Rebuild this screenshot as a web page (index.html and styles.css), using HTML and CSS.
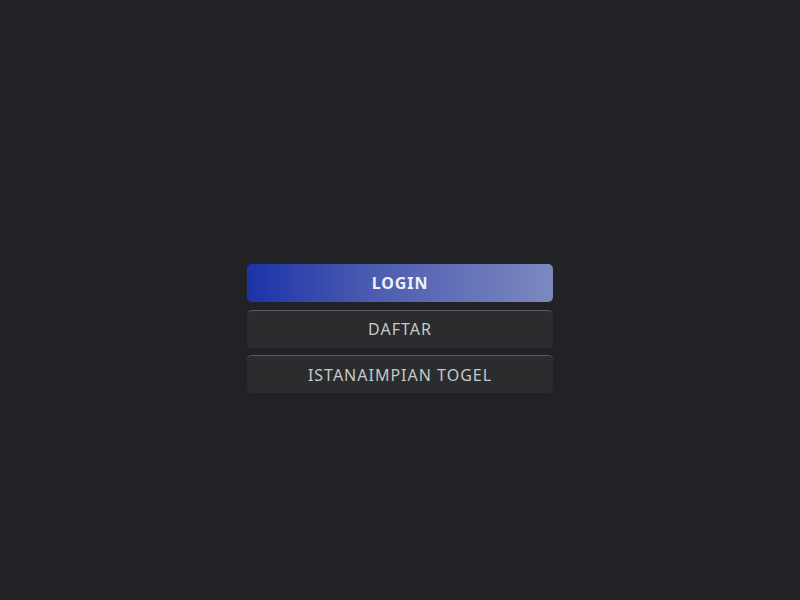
FILE: index.html
```html
<!DOCTYPE html>
<html>
<head>
<meta charset="utf-8">
<link rel="stylesheet" href="styles.css">
</head>
<body>
<div class="page">
  <div class="menu">
    <a class="btn btn-login">LOGIN</a>
    <a class="btn btn-dark">DAFTAR</a>
    <a class="btn btn-dark">ISTANAIMPIAN TOGEL</a>
  </div>
</div>
</body>
</html>
```
FILE: styles.css
```css
html, body {
  margin: 0;
  padding: 0;
  background: #212226;
  height: 100%;
}
.page {
  padding-top: 264px;
  display: flex;
  justify-content: center;
}
.menu {
  width: 306px;
  display: flex;
  flex-direction: column;
  gap: 7.5px;
}
.btn {
  display: flex;
  align-items: center;
  justify-content: center;
  height: 38px;
  box-sizing: border-box;
  border-radius: 5px;
  font-family: "Noto Sans", "Open Sans", sans-serif;
  font-size: 16px;
  letter-spacing: 1px;
}
.btn-login {
  background: linear-gradient(90deg, #1c33a8 0%, #4a5bb0 40%, #7c88bf 100%);
  color: #eef0fa;
  font-weight: bold;
  letter-spacing: 0.9px;
}
.btn-dark {
  background: #2a2c2e;
  color: #c8c9ca;
  border-top: 1px solid #5a5c5e;
}
```
